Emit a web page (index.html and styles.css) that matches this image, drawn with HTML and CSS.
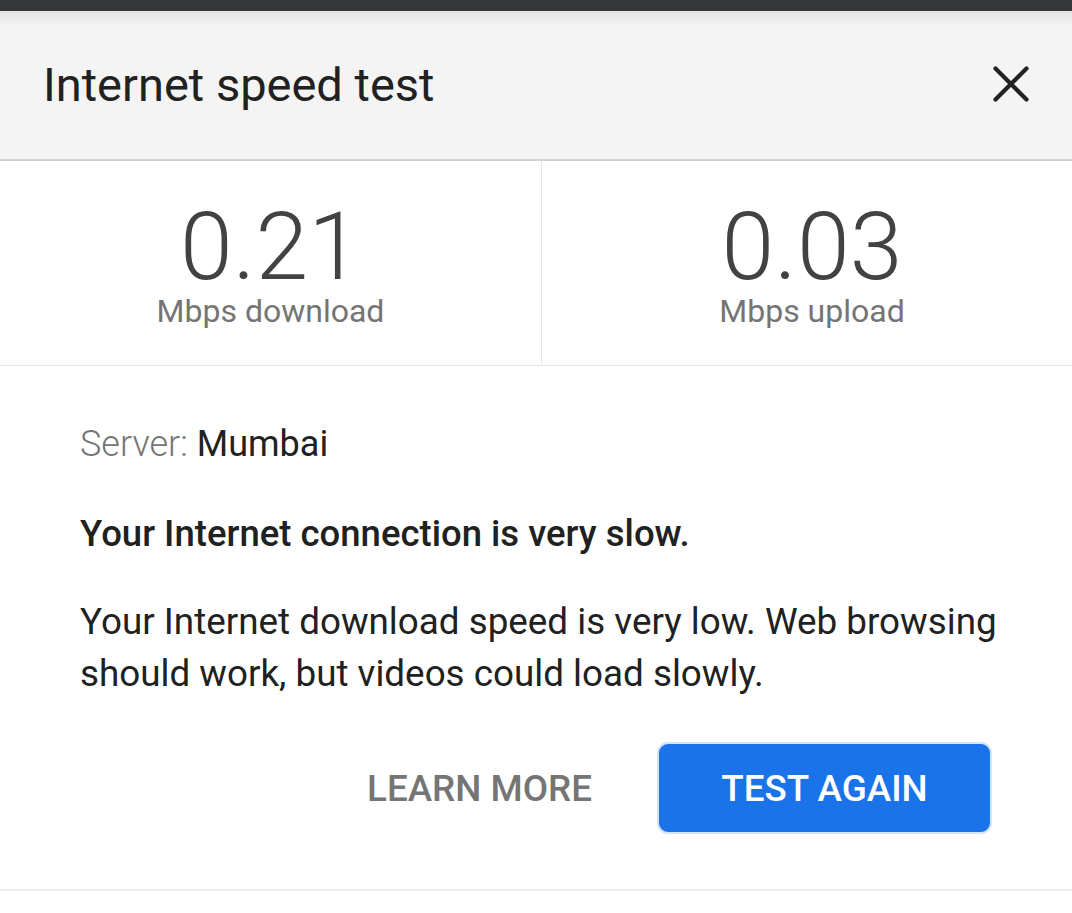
FILE: index.html
```html
<!DOCTYPE html>
<html lang="en">
<head>
<meta charset="utf-8">
<title>Internet speed test</title>
<link rel="stylesheet" href="styles.css">
</head>
<body>
<div class="statusbar"></div>
<header class="header">
  <h1 class="title">Internet speed test</h1>
  <button class="close" aria-label="Close">
    <svg width="36" height="36" viewBox="0 0 36 36"><path d="M2.5 2.5 L33.5 33.5 M33.5 2.5 L2.5 33.5" stroke="#222" stroke-width="4.2" stroke-linecap="round" fill="none"/></svg>
  </button>
</header>
<section class="stats">
  <div class="stat">
    <div class="value">0.21</div>
    <div class="unit">Mbps download</div>
  </div>
  <div class="stat">
    <div class="value">0.03</div>
    <div class="unit">Mbps upload</div>
  </div>
</section>
<section class="result">
  <p class="server"><span class="label">Server:</span> <span class="place">Mumbai</span></p>
  <p class="verdict">Your Internet connection is very slow.</p>
  <p class="desc">Your Internet download speed is very low. Web browsing should work, but videos could load slowly.</p>
  <div class="actions">
    <button class="btn-text">LEARN MORE</button>
    <button class="btn-primary">TEST AGAIN</button>
  </div>
</section>
</body>
</html>
```

FILE: styles.css
```css
* { box-sizing: border-box; }
html, body { margin: 0; padding: 0; background: #fff; }
body {
  width: 1072px;
  height: 913px;
  overflow: hidden;
  font-family: Roboto, "Noto Sans", sans-serif;
  color: #212121;
}
.statusbar {
  height: 11px;
  background: #35363a;
}
.header {
  height: 150px;
  background: linear-gradient(#e2e2e2 0, #f4f4f4 14px, #f4f4f4 100%);
  border-bottom: 2px solid #d2d2d2;
  display: flex;
  align-items: center;
  justify-content: space-between;
  padding: 0 43px 0 43px;
}
.title {
  margin: 0;
  font-size: 47px;
  font-weight: 400;
  color: #212121;
  padding-bottom: 2px;
}
.close {
  border: 0;
  background: transparent;
  padding: 0;
  width: 36px;
  height: 36px;
  display: flex;
  margin-bottom: 2px;
}
.stats {
  display: flex;
  height: 205px;
  border-bottom: 1px solid #e6e6e6;
}
.stat {
  flex: 1;
  display: flex;
  flex-direction: column;
  align-items: center;
  padding-top: 40px;
}
.stat:first-child {
  flex: 0 0 541px;
}
.stat + .stat {
  border-left: 1px solid #e6e6e6;
  padding-left: 10px;
}
.value {
  font-size: 95px;
  font-weight: 300;
  line-height: 92px;
  color: #424242;
}
.unit {
  font-size: 32px;
  font-weight: 400;
  color: #757575;
  line-height: 36px;
}
.result {
  padding: 56px 70px 0 80px;
  height: 525px;
  border-bottom: 2px solid #eeeeee;
}
.result p { margin: 0; }
.server {
  font-size: 36px;
  line-height: 44px;
}
.server .label {
  color: #757575;
  font-weight: 300;
}
.server .place { color: #212121; }
.verdict {
  margin-top: 46px !important;
  font-size: 36.5px;
  font-weight: 500;
  line-height: 44px;
}
.desc {
  margin-top: 40px !important;
  font-size: 36.8px;
  line-height: 52px;
}
.actions {
  display: flex;
  justify-content: flex-end;
  align-items: center;
  gap: 65px;
  margin-top: 42px;
  padding-right: 10px;
}
.btn-text {
  border: 0;
  background: transparent;
  font-family: inherit;
  font-size: 36.8px;
  font-weight: 500;
  color: #757575;
  padding: 0;
}
.btn-primary {
  font-family: inherit;
  font-size: 36.8px;
  font-weight: 500;
  color: #fff;
  background: #1a73e8;
  border: 2px solid #d2e3fc;
  border-radius: 11px;
  width: 335px;
  height: 92px;
  padding: 0;
}
```
